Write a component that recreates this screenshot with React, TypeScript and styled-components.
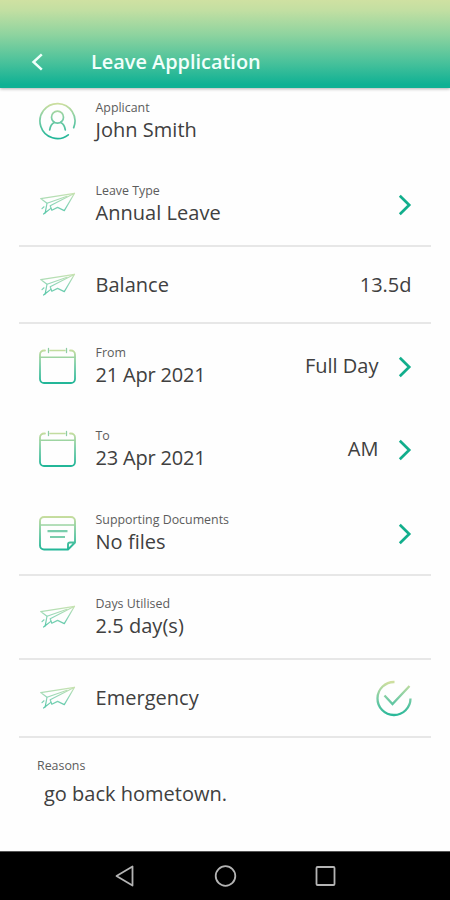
import React from "react";
import styled, { createGlobalStyle } from "styled-components";

const GlobalStyle = createGlobalStyle`
  * { box-sizing: border-box; }
  body { margin: 0; background: #fefefe; }
`;

const Screen = styled.div`
  width: 450px;
  height: 900px;
  display: flex;
  flex-direction: column;
  background: #fefefe;
  color: #404040;
  font-family: "Open Sans", "Noto Sans", sans-serif;
  overflow: hidden;
`;

const Header = styled.header`
  flex: none;
  height: 88px;
  padding: 36px 0 0 30px;
  display: flex;
  align-items: flex-start;
  background: linear-gradient(#cfe1a2 0%, #c2dfa2 12%, #8dd39f 40%, #4bc29b 70%, #0fb194 96%, #0fb194 100%);
  box-shadow: 0 1px 3px rgba(0, 0, 0, 0.3);
`;

const BackIcon = styled.svg`
  width: 16px;
  height: 20px;
  margin-top: 16px;
`;

const Title = styled.h1`
  margin: 12px 0 0 45px;
  font-size: 19.9px;
  line-height: 28px;
  font-weight: 600;
  color: #f2fffb;
  white-space: nowrap;
`;

const Form = styled.main`
  flex: 1;
  padding: 0 19px;
`;

const Row = styled.section<{ $height: number; $line?: boolean; $raise?: number }>`
  height: ${(p) => p.$height}px;
  padding: 0 19.5px ${(p) => p.$raise ?? 0}px 20px;
  display: flex;
  align-items: center;
  border-bottom: ${(p) => (p.$line ? "2px solid #e7e7e7" : "none")};
`;

const IconSlot = styled.div`
  width: 37px;
  height: 40px;
  margin-right: 19.5px;
  flex: none;
  svg { display: block; width: 37px; height: 40px; }
`;

const Texts = styled.div`
  flex: 1;
  white-space: nowrap;
`;

const Label = styled.div`
  font-size: 12.4px;
  line-height: 18px;
  color: #5c5c5c;
`;

const Value = styled.div<{ $tight?: boolean }>`
  font-size: 20px;
  line-height: 26px;
  letter-spacing: ${(p) => (p.$tight ? "-0.2px" : "0.03px")};
`;

const Trailing = styled.div`
  font-size: 20px;
  line-height: 26px;
  display: flex;
  align-items: center;
  gap: 19px;
`;

const Chevron = styled.svg`
  width: 14px;
  height: 22px;
  margin-top: 2px;
`;

const CheckIcon = styled.svg`
  width: 37px;
  height: 37px;
`;

const Reasons = styled.section`
  padding: 19px 18px 0;
`;

const ReasonText = styled.div`
  padding: 6px 0 0 7px;
  font-size: 20px;
  line-height: 26px;
`;

const NavBar = styled.nav`
  flex: none;
  height: 49px;
  padding: 0 112px;
  display: flex;
  align-items: center;
  justify-content: space-between;
  background: #000;
  border-top: 1px solid #555;
  svg { width: 26px; height: 26px; fill: none; stroke: #b4b4b4; stroke-width: 1.8; stroke-linejoin: round; }
`;

const Gradient = ({ id }: { id: string }) => (
  <defs>
    <linearGradient id={id} gradientUnits="userSpaceOnUse" x1="0" y1="2" x2="0" y2="37">
      <stop offset="0" stopColor="#cfdf9e" />
      <stop offset="0.5" stopColor="#74cba5" />
      <stop offset="1" stopColor="#22b698" />
    </linearGradient>
  </defs>
);

const PersonIcon = () => (
  <svg viewBox="0 0 37 40" fill="none" stroke="url(#person)" strokeWidth="1.7" strokeLinecap="round">
    <Gradient id="person" />
    <path d="M34.7 26.6A17.5 17.5 0 1 0 29.3 33.8" />
    <circle cx="18.5" cy="16.2" r="6" />
    <path d="M10.7 28.8C11.2 25.4 12.8 22.8 15.3 21.5M21.7 21.5C24.2 22.8 25.8 25.4 26.3 28.8" />
  </svg>
);

const PlaneIcon = () => (
  <svg viewBox="0 0 37 40" fill="none" strokeWidth="1.2" strokeLinejoin="round" strokeLinecap="round">
    <defs>
      <linearGradient id="plane" gradientUnits="userSpaceOnUse" x1="0" y1="8" x2="0" y2="31">
        <stop offset="0" stopColor="#cfe4b0" />
        <stop offset="0.5" stopColor="#8fd6b8" />
        <stop offset="1" stopColor="#51c5a6" />
      </linearGradient>
    </defs>
    <g stroke="url(#plane)">
      <path d="M35.5 9.3L1.7 14.6L8 19.2L6.2 28.8L11.8 24.4" />
      <path d="M35.5 9.3L25.3 26.6L18.6 23.4L12.8 26.2L11.2 21.8L35.5 9.3Z" />
      <path d="M8 19.2L28 12.2M5 22.8L3 24.6M6.2 28.8L4.6 30" />
    </g>
  </svg>
);

const CalendarIcon = () => (
  <svg viewBox="0 0 37 40" fill="none" stroke="url(#calendar)" strokeWidth="1.8" strokeLinecap="round">
    <Gradient id="calendar" />
    <path d="M6 4.5H5A4 4 0 0 0 1 8.5V33A4 4 0 0 0 5 37H32A4 4 0 0 0 36 33V8.5A4 4 0 0 0 32 4.5H31" />
    <path d="M11 4.5H26M1 11.2H36" strokeWidth="1.4" />
    <path d="M9.5 2.5V6.5M27.5 2.5V6.5" stroke="#8fcda4" strokeWidth="1.3" />
  </svg>
);

const DocumentIcon = () => (
  <svg viewBox="0 0 37 40" fill="none" stroke="url(#document)" strokeWidth="1.9" strokeLinejoin="round">
    <Gradient id="document" />
    <path d="M29 36.5H5A4 4 0 0 1 1 32.5V8A4 4 0 0 1 5 4H32A4 4 0 0 1 36 8V29.5L29 36.5V31.5A2 2 0 0 1 31 29.5H36" />
    <path d="M1 12H36" strokeWidth="1.5" />
    <path d="M8.5 18.2H28.5M11 24H26" stroke="#7acdac" strokeWidth="2.2" />
  </svg>
);

const Next = () => (
  <Chevron viewBox="0 0 14 22" fill="none" stroke="#12ae8c" strokeWidth="2.7">
    <path d="M1.8 1.8L11.2 11L1.8 20.2" />
  </Chevron>
);

type FieldProps = {
  height: number;
  icon: React.ReactNode;
  label?: string;
  value: string;
  line?: boolean;
  raise?: number;
  tight?: boolean;
  children?: React.ReactNode;
};

const Field = ({ height, icon, label, value, line, raise, tight, children }: FieldProps) => (
  <Row $height={height} $line={line} $raise={raise}>
    <IconSlot>{icon}</IconSlot>
    <Texts>
      {label && <Label>{label}</Label>}
      <Value $tight={tight}>{value}</Value>
    </Texts>
    <Trailing>{children}</Trailing>
  </Row>
);

export default function App() {
  return (
    <Screen>
      <GlobalStyle />
      <Header>
        <BackIcon viewBox="0 0 16 20" fill="none" stroke="#effffa" strokeWidth="2.5">
          <path d="M11.8 2.3L3.5 10L11.8 17.7" />
        </BackIcon>
        <Title>Leave Application</Title>
      </Header>
      <Form>
        <Field height={75} raise={9} icon={<PersonIcon />} label="Applicant" value="John Smith" />
        <Field height={84} line icon={<PlaneIcon />} label="Leave Type" value="Annual Leave">
          <Next />
        </Field>
        <Field height={77} line icon={<PlaneIcon />} value="Balance">13.5d</Field>
        <Field height={83} icon={<CalendarIcon />} label="From" value="21 Apr 2021" tight>
          Full Day<Next />
        </Field>
        <Field height={84} icon={<CalendarIcon />} label="To" value="23 Apr 2021" tight>
          AM<Next />
        </Field>
        <Field height={85} line icon={<DocumentIcon />} label="Supporting Documents" value="No files">
          <Next />
        </Field>
        <Field height={84} line icon={<PlaneIcon />} label="Days Utilised" value="2.5 day(s)" />
        <Field height={78} line icon={<PlaneIcon />} value="Emergency">
          <CheckIcon viewBox="0 0 37 37" fill="none" stroke="url(#check)" strokeWidth="2.3">
            <Gradient id="check" />
            <path d="M19.5 2A16.5 16.5 0 1 0 35.5 18.5" />
            <path d="M9.5 15.5L17.5 24L34.5 6" />
          </CheckIcon>
        </Field>
        <Reasons>
          <Label>Reasons</Label>
          <ReasonText>go back hometown.</ReasonText>
        </Reasons>
      </Form>
      <NavBar>
        <svg viewBox="0 0 26 26"><path d="M20.5 3.5V22.5L4.5 13Z" /></svg>
        <svg viewBox="0 0 26 26"><circle cx="13.5" cy="13" r="9.8" /></svg>
        <svg viewBox="0 0 26 26"><rect x="4.5" y="4" width="18" height="18" rx="1" /></svg>
      </NavBar>
    </Screen>
  );
}
